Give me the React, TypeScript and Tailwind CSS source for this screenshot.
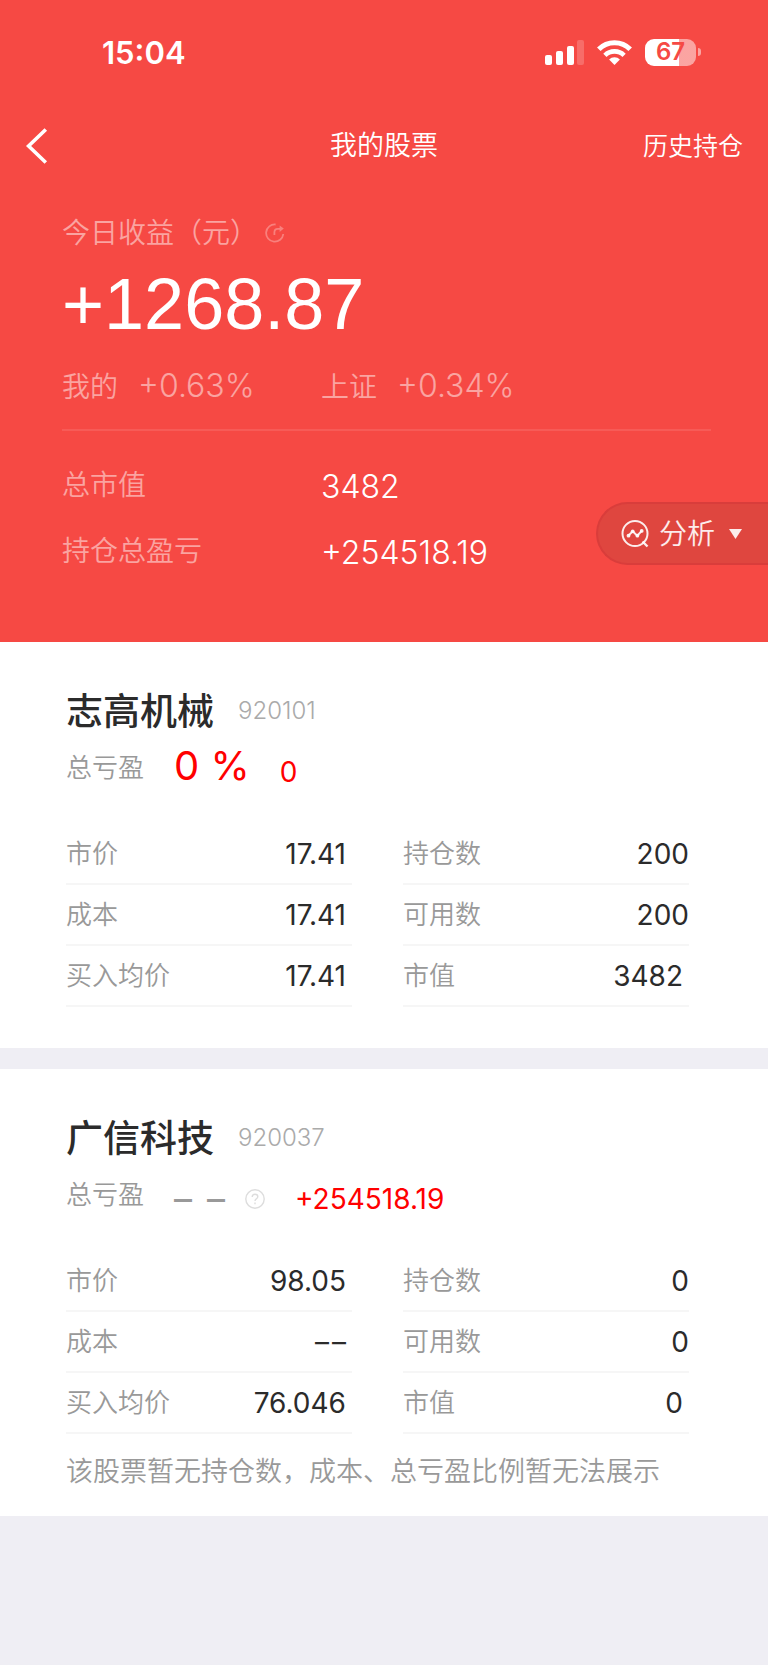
import type { ReactNode } from 'react';

type Field = { label: string; value: string | null; inset?: boolean };

type Stock = {
  name: string;
  code: string;
  rate: string | null;
  profit: string;
  left: Field[];
  right: Field[];
  note?: string;
};

const stocks: Stock[] = [
  {
    name: '志高机械',
    code: '920101',
    rate: '0 %',
    profit: '0',
    left: [
      { label: '市价', value: '17.41', inset: true },
      { label: '成本', value: '17.41', inset: true },
      { label: '买入均价', value: '17.41', inset: true },
    ],
    right: [
      { label: '持仓数', value: '200' },
      { label: '可用数', value: '200' },
      { label: '市值', value: '3482', inset: true },
    ],
  },
  {
    name: '广信科技',
    code: '920037',
    rate: null,
    profit: '+254518.19',
    left: [
      { label: '市价', value: '98.05', inset: true },
      { label: '成本', value: null, inset: true },
      { label: '买入均价', value: '76.046', inset: true },
    ],
    right: [
      { label: '持仓数', value: '0' },
      { label: '可用数', value: '0' },
      { label: '市值', value: '0', inset: true },
    ],
    note: '该股票暂无持仓数，成本、总亏盈比例暂无法展示',
  },
];

function StatusBar() {
  return (
    <div className="flex h-[104px] items-center justify-between pr-[67px] pl-[102px]">
      <span className="text-[31px] leading-none font-semibold">15:04</span>
      <div className="flex items-center gap-[13px]">
        <svg className="h-[25px] w-[39px]" viewBox="0 0 39 25" fill="currentColor" aria-hidden="true">
          <rect x="0" y="15" width="7" height="10" rx="2" />
          <rect x="11" y="11" width="7" height="14" rx="2" />
          <rect x="22" y="6" width="7" height="19" rx="2" />
          <rect x="32" y="0" width="7" height="25" rx="2" opacity="0.2" />
        </svg>
        <svg className="h-[25px] w-[35px]" viewBox="0 0 35 25" fill="none" aria-hidden="true">
          <path d="M1.8 9.2a22.2 22.2 0 0 1 31.4 0" stroke="currentColor" strokeWidth="5" />
          <path d="M7.9 15.3a13.6 13.6 0 0 1 19.2 0" stroke="currentColor" strokeWidth="4.6" />
          <path d="M17.5 25l-5.4-5.4a7.6 7.6 0 0 1 10.8 0z" fill="currentColor" />
        </svg>
        <div className="flex items-center gap-0.5">
          <div className="flex h-[27px] w-[51px] items-center justify-center rounded-[9px] bg-linear-to-r from-white from-67% to-white/50 to-67% text-[24px] leading-none font-semibold text-[#f64944]">
            67
          </div>
          <div className="h-2 w-[3px] rounded-r-full bg-white/50" />
        </div>
      </div>
    </div>
  );
}

function NavBar() {
  return (
    <nav className="grid h-[84px] grid-cols-[1fr_auto_1fr] items-center px-[25px]">
      <button type="button" aria-label="返回" className="justify-self-start">
        <svg className="h-9 w-6" viewBox="0 0 24 36" fill="none" stroke="currentColor" strokeWidth="3.6" aria-hidden="true">
          <path d="M20.8 1.5L3.6 18l17.2 16.5" />
        </svg>
      </button>
      <h1 className="text-[27px] leading-10 font-[350]">我的股票</h1>
      <a href="#history" className="justify-self-end text-[25px] leading-10 font-[350]">
        历史持仓
      </a>
    </nav>
  );
}

function ShareIcon() {
  return (
    <svg className="h-5 w-5 text-white/30" viewBox="0 0 20 20" fill="none" aria-hidden="true">
      <g stroke="currentColor" strokeWidth="1.8">
        <path d="M10.6 1.5A8.600 8.600 0 1 0 18.300 11" />
        <path d="M9.400 12V9.200c0-2.200 1.200-3.400 3.400-3.400h2" />
      </g>
      <path d="M14.600 2.600l4.200 3-4.200 3.400z" fill="currentColor" />
    </svg>
  );
}

function Rate({ label, value }: { label: string; value: string }) {
  return (
    <div className="flex items-center gap-5">
      <dt className="pt-0.5 text-[28px]">{label}</dt>
      <dd className="text-[32px]">{value}</dd>
    </div>
  );
}

function Total({ label, value }: { label: string; value: string }) {
  return (
    <div className="grid h-[66px] grid-cols-[259px_1fr] items-center">
      <dt className="text-[28px] text-white/50">{label}</dt>
      <dd className="pt-1 text-[32px]">{value}</dd>
    </div>
  );
}

function Summary() {
  return (
    <section className="relative pt-[22px] pr-[57px] pb-[58px] pl-[62px] font-[350]">
      <div className="flex h-[46px] items-center gap-[7px] text-[28px] text-white/50">
        <h2>今日收益（元）</h2>
        <ShareIcon />
      </div>
      <p className="font-['Liberation_Sans',sans-serif] text-[72px] leading-[96px] font-normal">+1268.87</p>
      <dl className="grid h-[68px] grid-cols-[259px_1fr] items-center text-white/50">
        <Rate label="我的" value="+0.63%" />
        <Rate label="上证" value="+0.34%" />
      </dl>
      <dl className="mt-[9px] border-t-2 border-white/10 pt-[21px]">
        <Total label="总市值" value="3482" />
        <Total label="持仓总盈亏" value="+254518.19" />
      </dl>
      <button
        type="button"
        className="absolute right-0 bottom-[77px] flex h-[63px] w-[172px] items-center rounded-l-full border-2 border-r-0 border-[#d93d3b] bg-[#df463f] pl-[23px] text-[28px] text-white/90"
      >
        <svg className="h-7 w-7" viewBox="0 0 28 28" fill="none" stroke="currentColor" strokeWidth="2" aria-hidden="true">
          <circle cx="14" cy="13.500" r="12.500" />
          <path d="M21.500 21.500l5 5" strokeWidth="2.400" />
          <path d="M7.500 15.500l4.200-4.200 4.600 4.400 4.400-4.800" />
          <g fill="currentColor" stroke="none">
            <circle cx="7.500" cy="15.700" r="1.900" />
            <circle cx="11.700" cy="11.300" r="1.900" />
            <circle cx="16.400" cy="15.700" r="1.900" />
            <circle cx="20.700" cy="10.900" r="1.900" />
          </g>
        </svg>
        <span className="ml-2.5">分析</span>
        <svg className="ml-3.5 h-2.5 w-[13px]" viewBox="0 0 13 10" fill="currentColor" aria-hidden="true">
          <path d="M0 0h13L6.500 10z" />
        </svg>
      </button>
    </section>
  );
}

function Column({ fields }: { fields: Field[] }) {
  return (
    <dl>
      {fields.map((f) => (
        <div key={f.label} className="flex h-[61px] items-center justify-between border-b-2 border-[#f6f6f6]">
          <dt className="text-[26px] text-[#999]">{f.label}</dt>
          <dd
            className={
              f.inset ? 'pr-1.5 text-[28px] font-normal text-[#2b2b2b]' : 'text-[28px] font-normal text-[#2b2b2b]'
            }
          >
            {f.value ?? (
              <span className="flex gap-[3px]">
                <span>–</span>
                <span>–</span>
              </span>
            )}
          </dd>
        </div>
      ))}
    </dl>
  );
}

function MissingRate() {
  return (
    <div className="flex h-10 items-center">
      <span className="flex gap-[15px] text-[36px] leading-10 font-normal text-[#999]">
        <span>–</span>
        <span>–</span>
      </span>
      <button type="button" aria-label="说明" className="ml-5">
        <svg className="h-5 w-5 text-[#ddd]" viewBox="0 0 20 20" fill="none" stroke="currentColor" strokeWidth="1.400" aria-hidden="true">
          <circle cx="10" cy="10" r="9.200" />
          <path d="M7.200 8c0-1.700 1.200-2.800 2.800-2.800s2.800 1 2.800 2.500c0 2-2.800 2.200-2.800 4.300M10 13.600v1.600" />
        </svg>
      </button>
    </div>
  );
}

function Card({ stock }: { stock: Stock }) {
  return (
    <article className="bg-white pt-[43px] pr-[79px] pl-[66px] font-[350]">
      <header className="flex h-[52px] items-center gap-6">
        <h2 className="text-[37px] font-medium text-[#2b2b2b]">{stock.name}</h2>
        <span className="text-[24px] text-[#aaa]">{stock.code}</span>
      </header>
      <div className="flex h-[55px] items-end">
        <span className="pb-1 text-[26px] leading-10 text-[#999]">总亏盈</span>
        <div className="ml-[30px]">
          {stock.rate === null ? (
            <MissingRate />
          ) : (
            <div className="pb-px text-[40px] leading-[50px] font-normal text-[#f00]">{stock.rate}</div>
          )}
        </div>
        <span className="ml-[30px] text-[28px] leading-10 font-normal text-[#f00]">{stock.profit}</span>
      </div>
      <div className="mt-8 grid grid-cols-2 gap-[51px]">
        <Column fields={stock.left} />
        <Column fields={stock.right} />
      </div>
      {stock.note ? (
        <p className="pt-5 pb-[26px] text-[27px] leading-9 text-[#999]">{stock.note}</p>
      ) : (
        <div className="h-[41px]" />
      )}
    </article>
  );
}

function Screen({ children }: { children: ReactNode }) {
  return (
    <div className="min-h-screen bg-[#efeef4] font-['Inter','Noto_Sans_CJK_SC',sans-serif] leading-none font-normal" lang="zh-CN">
      {children}
    </div>
  );
}

export default function App() {
  return (
    <Screen>
      <div className="bg-[#f64944] text-white">
        <StatusBar />
        <NavBar />
        <Summary />
      </div>
      <main className="flex flex-col gap-[21px]">
        {stocks.map((s) => (
          <Card key={s.code} stock={s} />
        ))}
      </main>
    </Screen>
  );
}
